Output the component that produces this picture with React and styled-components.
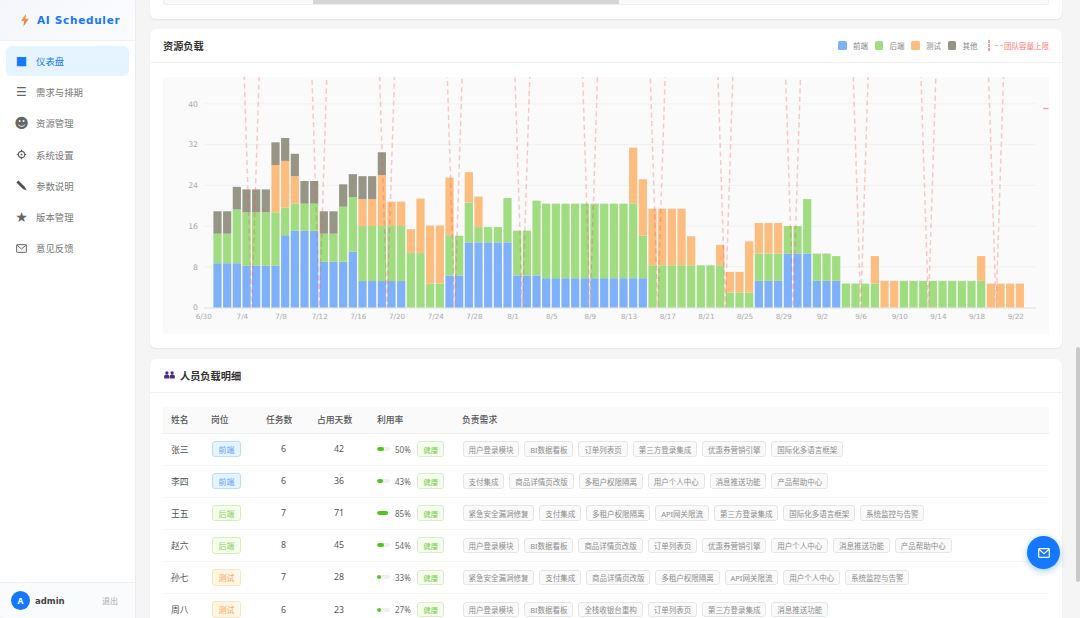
import React from 'react';
import styled, { createGlobalStyle } from 'styled-components';

const GlobalStyle = createGlobalStyle`
  html, body {
    margin: 0;
    height: 100%;
    overflow: hidden;
    background: #f5f5f5;
    font-family: "Noto Sans", "Noto Sans CJK SC", sans-serif;
  }
  * { box-sizing: border-box; }
`;

const Shell = styled.div`
  display: flex;
  height: 618px;
  overflow: hidden;
  position: relative;
`;

const Sidebar = styled.aside`
  width: 136px;
  flex-shrink: 0;
  display: flex;
  flex-direction: column;
  background: #fff;
  border-right: 1px solid #ececec;
  border-bottom-left-radius: 6px;
`;

const Brand = styled.div`
  height: 41px;
  display: flex;
  align-items: center;
  gap: 5px;
  padding-left: 18px;
  background: linear-gradient(135deg, #f4f6fb, #fbfcfe);
  border-bottom: 1px solid #f0f0f0;
`;

const BrandName = styled.span`
  font-family: "DejaVu Sans", sans-serif;
  font-size: 10.5px;
  font-weight: 700;
  letter-spacing: 0.7px;
  color: #1677ff;
`;

const Menu = styled.nav`
  flex: 1;
  padding: 5px 6px 0;
  display: flex;
  flex-direction: column;
  gap: 1.2px;
`;

const MenuItem = styled.div`
  height: 30px;
  display: flex;
  align-items: center;
  padding-left: 9px;
  border-radius: 6px;
  font-size: 9.4px;
  color: ${(p) => (p.$active ? '#1677ff' : '#777')};
  background: ${(p) => (p.$active ? '#e6f4ff' : 'transparent')};
`;

const MenuIcon = styled.span`
  width: 13px;
  margin-right: 8px;
  display: flex;
  justify-content: center;
  font-family: "DejaVu Sans", sans-serif;
  font-size: ${(p) => p.$size || 12}px;
  line-height: 1;
  color: ${(p) => (p.$active ? '#1677ff' : '#666')};
`;

const UserBar = styled.div`
  height: 36px;
  display: flex;
  align-items: center;
  padding: 0 17px 0 11px;
  background: #fafbfd;
  border-top: 1px solid #f0f0f0;
  border-bottom-left-radius: 6px;
`;

const Avatar = styled.div`
  width: 19px;
  height: 19px;
  border-radius: 50%;
  display: flex;
  align-items: center;
  justify-content: center;
  background: #1677ff;
  color: #fff;
  font-size: 8.5px;
  font-weight: 700;
`;

const UserName = styled.span`
  flex: 1;
  margin-left: 5px;
  font-family: "DejaVu Sans", sans-serif;
  font-size: 8.5px;
  font-weight: 700;
  color: #444;
`;

const Logout = styled.span`
  font-size: 8px;
  color: #aaa;
`;

const Main = styled.main`
  flex: 1;
  min-width: 0;
  display: flex;
  flex-direction: column;
  gap: 10.5px;
  padding: 0 18px 0 14px;
  background: #f5f5f5;
`;

const Card = styled.section`
  flex-shrink: 0;
  background: #fff;
  border-radius: 6px;
  box-shadow: 0 1px 2px rgba(0, 0, 0, 0.07);
`;

const TopStub = styled(Card)`
  height: 18.5px;
  padding: 0 13px;
  border-top-left-radius: 0;
  border-top-right-radius: 0;
`;

const StubTrack = styled.div`
  height: 4.5px;
  background: #fafafa;
  border: 1px solid #eee;
  border-top: 0;
  border-radius: 0 0 3px 3px;
  position: relative;
`;

const StubThumb = styled.div`
  position: absolute;
  left: 149px;
  top: 0;
  width: 306px;
  height: 4px;
  background: #d6d6d6;
`;

const CardHeader = styled.header`
  height: 34px;
  display: flex;
  align-items: center;
  justify-content: space-between;
  padding: 0 13px;
  border-bottom: 1px solid #f2f2f2;
`;

const CardTitle = styled.h3`
  margin: 0;
  display: flex;
  align-items: center;
  gap: 5px;
  padding-left: ${(p) => (p.$withIcon ? 1 : 0)}px;
  font-size: 10.2px;
  font-weight: 600;
  color: #333;
`;

const Legend = styled.div`
  display: flex;
  align-items: center;
  font-size: 7.5px;
  color: #888;
`;

const LegendItem = styled.span`
  display: flex;
  align-items: center;
  gap: 6.5px;
  margin-right: 6.5px;
`;

const Swatch = styled.i`
  width: 8.5px;
  height: 8.5px;
  border-radius: 1.5px;
  background: ${(p) => p.$color};
`;

const CapacityKey = styled.span`
  display: flex;
  align-items: center;
  margin-left: 3.5px;
  color: #ff7875;
`;

const CapacityBar = styled.i`
  width: 2px;
  height: 11px;
  margin-right: 5px;
  background: repeating-linear-gradient(#ff9c9d 0 3px, transparent 3px 4px);
`;

const CapacityDash = styled.i`
  width: 8px;
  margin-right: 1.5px;
  border-top: 1.2px dashed #ffb0b0;
`;

const ChartWrap = styled.div`
  padding: 14px 13px 14px;
`;

const ChartBox = styled.div`
  height: 257px;
  background: #fafafa;
  svg { display: block; }
`;

const TableWrap = styled.div`
  padding: 14px 13px 0;
`;

const Table = styled.table`
  width: 886px;
  border-collapse: collapse;
  table-layout: fixed;
  font-size: 8.8px;
  color: #555;
`;

const Th = styled.th`
  height: 26.5px;
  padding: 0 0 0 8px;
  text-align: left;
  font-weight: 500;
  background: #fafafa;
  color: #555;
  border-bottom: 1px solid #f0f0f0;
`;

const Td = styled.td`
  height: 32.1px;
  padding: 0 0 0 ${(p) => (p.$center ? 0 : 8)}px;
  text-align: ${(p) => (p.$center ? 'center' : 'left')};
  border-bottom: 1px solid #f5f5f5;
  white-space: nowrap;
`;

const roleColors = {
  前端: ['#e6f4ff', '#bcdcff', '#5a9fff'],
  后端: ['#f6ffed', '#d3efba', '#7fcf55'],
  测试: ['#fff7e6', '#ffe2bc', '#fa9f45'],
};

const Tag = styled.span`
  display: inline-flex;
  align-items: center;
  justify-content: center;
  height: 16.5px;
  padding: 0 5.5px;
  font-size: 7.9px;
  border-radius: 3px;
  border: 1px solid ${(p) => roleColors[p.$role][1]};
  background: ${(p) => roleColors[p.$role][0]};
  color: ${(p) => roleColors[p.$role][2]};
`;

const RoleCell = styled.div`
  padding-left: 1px;
`;

const UsageCell = styled.div`
  display: flex;
  align-items: center;
`;

const Progress = styled.div`
  width: 13px;
  height: 4px;
  border-radius: 2px;
  background: #f0f0f0;
  overflow: hidden;
`;

const ProgressFill = styled.div`
  height: 100%;
  border-radius: 2px;
  background: #52c41a;
`;

const Percent = styled.span`
  width: 22.3px;
  margin-left: 5px;
  font-size: 8px;
  color: #666;
`;

const HealthTag = styled.span`
  display: inline-flex;
  align-items: center;
  justify-content: center;
  width: 26.7px;
  height: 15.7px;
  font-size: 7.4px;
  border-radius: 3px;
  border: 1px solid #d9f0c6;
  background: #f6ffed;
  color: #76cc4c;
`;

const ReqList = styled.div`
  display: flex;
  gap: 5px;
  padding-left: 0.5px;
`;

const ReqTag = styled.span`
  display: inline-flex;
  align-items: center;
  height: 15.6px;
  padding: 0 4.9px;
  font-size: 7.5px;
  border-radius: 3px;
  border: 1px solid #e6e6e6;
  background: #fafafa;
  color: #8c8c8c;
`;

const Fab = styled.button`
  position: absolute;
  left: 1027px;
  top: 536px;
  width: 33px;
  height: 33px;
  padding: 0;
  border: 0;
  border-radius: 50%;
  display: flex;
  align-items: center;
  justify-content: center;
  background: #1677ff;
  box-shadow: 0 2px 7px rgba(22, 119, 255, 0.4);
`;

const ScrollThumb = styled.div`
  position: absolute;
  right: 0;
  top: 347px;
  width: 4px;
  height: 235px;
  border-radius: 2px;
  background: #c9c9c9;
`;

const GearIcon = () => (
  <svg width="11" height="11" viewBox="0 0 11 11" fill="none" stroke="#5f5f5f">
    <circle cx="5.5" cy="5.5" r="3.2" strokeWidth="1.2" />
    <circle cx="5.5" cy="5.5" r="1" fill="#5f5f5f" stroke="none" />
    <path d="M5.5 0.8V2.2M5.5 8.8V10.2M0.8 5.5H2.2M8.8 5.5H10.2" strokeWidth="1.2" />
  </svg>
);

const PencilIcon = () => (
  <svg width="11" height="11" viewBox="0 0 11 11">
    <path d="M0.4 2.4 L2.4 0.4 L9 7 L10.6 10.6 L7 9 Z" fill="#505050" />
  </svg>
);

const EnvelopeIcon = () => (
  <svg width="11" height="9" viewBox="0 0 11 9" fill="#f4f4f4" stroke="#6f6f6f" strokeWidth="1">
    <rect x="0.6" y="0.6" width="9.8" height="7.8" rx="0.6" />
    <path d="M0.8 1 L5.5 5 L10.2 1" fill="none" />
  </svg>
);

const menu = [
  { icon: '■', label: '仪表盘' },
  { icon: '☰', label: '需求与排期' },
  { icon: '☻', label: '资源管理', size: 14 },
  { icon: <GearIcon />, label: '系统设置' },
  { icon: <PencilIcon />, label: '参数说明' },
  { icon: '★', label: '版本管理', size: 14 },
  { icon: <EnvelopeIcon />, label: '意见反馈' },
];

const COLORS = { blue: '#7fb1fb', green: '#a0dc80', orange: '#fdbd7e', gray: '#979686' };

// [blue, green, orange, gray], cumulative tops read off the y axis
const bars = [
  [8.7, 14.5, 0, 18.9], [8.7, 14.5, 0, 18.9], [8.7, 19.25, 0, 23.7], [8.2, 18.7, 0, 23.2],
  [8.2, 18.7, 0, 23.2], [8.2, 18.7, 0, 23.2], [8.2, 18.7, 28, 32.45], [14.2, 19.6, 28.8, 33.3],
  [15.06, 20.4, 25.8, 30.2], [15.06, 20.4, 0, 24.85], [15.06, 20.4, 0, 24.85], [9, 14.5, 0, 18.9],
  [9, 14.5, 0, 18.9], [9, 19.8, 0, 24.2], [11, 21.7, 0, 26.2], [5.2, 16, 21.3, 25.8],
  [5.2, 16, 21.3, 25.8], [5.2, 16, 26, 30.5], [5.2, 16, 20.8, 0], [5.2, 16, 20.8, 0],
  [0, 10.7, 15.4, 0], [0, 10.7, 21.4, 0], [0, 4.7, 16.1, 0], [0, 4.7, 16.1, 0],
  [6.3, 14.2, 25.5, 0], [6.3, 14.1, 0, 0], [12.8, 20.6, 26.6, 0], [12.8, 15.8, 21.8, 0],
  [12.8, 15.8, 0, 0], [12.8, 15.8, 0, 0], [12.8, 21.5, 0, 0], [6.3, 15.1, 0, 0],
  [6.3, 15.1, 0, 0], [6.3, 21, 0, 0],
  ...Array.from({ length: 9 }, () => [5.76, 20.4, 0, 0]),
  [5.76, 20.4, 31.4, 0], [5.76, 14.1, 25.2, 0], [0, 8.3, 19.4, 0], [0, 8.3, 19.4, 0],
  [0, 8.3, 19.4, 0], [0, 8.3, 19.4, 0], [0, 8.3, 14, 0], [0, 8.3, 0, 0], [0, 8.3, 0, 0],
  [0, 8.3, 12.3, 0], [0, 2.95, 7, 0], [0, 2.95, 7, 0], [0, 2.95, 13, 0], [5.24, 10.6, 16.6, 0],
  [5.24, 10.6, 16.6, 0], [5.24, 10.6, 16.6, 0], [10.6, 16, 0, 0], [10.6, 16, 0, 0],
  [10.6, 21.3, 0, 0], [5.24, 10.6, 0, 0], [5.24, 10.6, 0, 0], [5.24, 10.1, 0, 0],
  [0, 4.7, 0, 0], [0, 4.7, 0, 0], [0, 4.7, 0, 0], [0, 4.7, 10.1, 0], [0, 0, 5.24, 0], [0, 0, 5.24, 0],
  ...Array.from({ length: 8 }, () => [0, 5.24, 0, 0]),
  [0, 5.24, 10.1, 0], [0, 0, 4.7, 0], [0, 0, 4.7, 0], [0, 0, 4.7, 0], [0, 0, 4.7, 0],
];

const BASE = 307.5;
const UNIT = 5.09;
const yOf = (v) => BASE - v * UNIT;

const dateLabels = [
  '6/30', '7/4', '7/8', '7/12', '7/16', '7/20', '7/24', '7/28', '8/1', '8/5', '8/9', '8/13',
  '8/17', '8/21', '8/25', '8/29', '9/2', '9/6', '9/10', '9/14', '9/18', '9/22',
];

const capacityPoints = () => {
  const pts = [];
  for (let k = 0; k < 12; k++) {
    const c = 251.7 + 67.67 * k;
    pts.push(`${c - 9.67},7`, `${c},${BASE}`, `${c + 9.67},7`);
  }
  return pts.join(' ');
};

const LoadChart = () => (
  <svg width="886" height="257" viewBox="163 77 886 257">
    {[8, 16, 24, 32, 40].map((v) => (
      <line key={v} x1="204" x2="1036" y1={yOf(v)} y2={yOf(v)} stroke="#f1f1f1" />
    ))}
    <line x1="204" x2="1036" y1={BASE + 0.5} y2={BASE + 0.5} stroke="#e9e9e9" strokeWidth="1.5" />
    {[0, 8, 16, 24, 32, 40].map((v) => (
      <text key={v} x="198" y={yOf(v) + 2.8} textAnchor="end" fontSize="7.7" fill="#aaa" fontFamily="DejaVu Sans, sans-serif">
        {v}
      </text>
    ))}
    {dateLabels.map((d, i) => (
      <text key={d} x={203.7 + 38.67 * i} y="319" textAnchor="middle" fontSize="7.2" fill="#aaa" fontFamily="DejaVu Sans, sans-serif">
        {d}
      </text>
    ))}
    {bars.map(([b, g, o, y], i) => {
      const x = 213.4 + 9.667 * i;
      const segs = [[0, b, COLORS.blue], [b, g, COLORS.green], [g || b, o, COLORS.orange], [o || g, y, COLORS.gray]];
      return segs
        .filter(([from, to]) => to > 0 && to > from)
        .map(([from, to, color]) => (
          <rect key={color + i} x={x} y={yOf(to)} width="8.2" height={(to - from) * UNIT} fill={color} />
        ));
    })}
    <polyline points={capacityPoints()} fill="none" stroke="#ff4d4f" strokeOpacity="0.3" strokeWidth="1.5" strokeDasharray="5 3.5" />
    <line x1="1043" x2="1048.5" y1="108.5" y2="108.5" stroke="#ff9c9d" strokeWidth="1.2" />
  </svg>
);

const people = [
  ['张三', '前端', 6, 42, 50, ['用户登录模块', 'BI数据看板', '订单列表页', '第三方登录集成', '优惠券营销引擎', '国际化多语言框架']],
  ['李四', '前端', 6, 36, 43, ['支付集成', '商品详情页改版', '多租户权限隔离', '用户个人中心', '消息推送功能', '产品帮助中心']],
  ['王五', '后端', 7, 71, 85, ['紧急安全漏洞修复', '支付集成', '多租户权限隔离', 'API网关限流', '第三方登录集成', '国际化多语言框架', '系统监控与告警']],
  ['赵六', '后端', 8, 45, 54, ['用户登录模块', 'BI数据看板', '商品详情页改版', '订单列表页', '优惠券营销引擎', '用户个人中心', '消息推送功能', '产品帮助中心']],
  ['孙七', '测试', 7, 28, 33, ['紧急安全漏洞修复', '支付集成', '商品详情页改版', '多租户权限隔离', 'API网关限流', '用户个人中心', '系统监控与告警']],
  ['周八', '测试', 6, 23, 27, ['用户登录模块', 'BI数据看板', '全栈收银台重构', '订单列表页', '第三方登录集成', '消息推送功能']],
];

const colWidths = [40, 55, 51, 60, 85, 595];

const BoltIcon = () => (
  <svg width="14" height="14" viewBox="0 0 14 14">
    <defs>
      <linearGradient id="bolt" x1="0" y1="0" x2="0" y2="1">
        <stop offset="0" stopColor="#f7a544" />
        <stop offset="1" stopColor="#f06a3c" />
      </linearGradient>
    </defs>
    <path d="M8.2 0.5 L3 7.8 H6.2 L5.4 13.5 L10.8 5.8 H7.4 Z" fill="url(#bolt)" />
  </svg>
);

const TeamIcon = () => (
  <svg width="11" height="8" viewBox="0 0 11 8" fill="#4a2a85">
    <circle cx="2.9" cy="1.8" r="1.6" />
    <circle cx="8.1" cy="1.8" r="1.6" />
    <path d="M0.2 7.6 V5.2 C0.2 4 1.4 3.4 2.9 3.4 C4.4 3.4 5.2 4 5.2 5.2 V7.6 Z" />
    <path d="M5.8 7.6 V5.2 C5.8 4 6.6 3.4 8.1 3.4 C9.6 3.4 10.8 4 10.8 5.2 V7.6 Z" />
  </svg>
);

const MailIcon = () => (
  <svg width="12" height="10" viewBox="0 0 12 10" fill="none" stroke="#fff" strokeWidth="1.2">
    <rect x="0.7" y="0.7" width="10.6" height="8.6" rx="0.8" />
    <path d="M0.9 1.2 L6 5.6 L11.1 1.2" />
  </svg>
);

const App = () => (
  <Shell>
    <GlobalStyle />
    <Sidebar>
      <Brand>
        <BoltIcon />
        <BrandName>AI Scheduler</BrandName>
      </Brand>
      <Menu>
        {menu.map(({ icon, label, size }, i) => (
          <MenuItem key={label} $active={i === 0}>
            <MenuIcon $active={i === 0} $size={size}>{icon}</MenuIcon>
            {label}
          </MenuItem>
        ))}
      </Menu>
      <UserBar>
        <Avatar>A</Avatar>
        <UserName>admin</UserName>
        <Logout>退出</Logout>
      </UserBar>
    </Sidebar>
    <Main>
      <TopStub>
        <StubTrack>
          <StubThumb />
        </StubTrack>
      </TopStub>
      <Card>
        <CardHeader>
          <CardTitle>资源负载</CardTitle>
          <Legend>
            <LegendItem><Swatch $color={COLORS.blue} />前端</LegendItem>
            <LegendItem><Swatch $color={COLORS.green} />后端</LegendItem>
            <LegendItem><Swatch $color={COLORS.orange} />测试</LegendItem>
            <LegendItem><Swatch $color={COLORS.gray} />其他</LegendItem>
            <CapacityKey>
              <CapacityBar />
              <CapacityDash />
              团队容量上限
            </CapacityKey>
          </Legend>
        </CardHeader>
        <ChartWrap>
          <ChartBox>
            <LoadChart />
          </ChartBox>
        </ChartWrap>
      </Card>
      <Card>
        <CardHeader>
          <CardTitle $withIcon>
            <TeamIcon />
            人员负载明细
          </CardTitle>
        </CardHeader>
        <TableWrap>
          <Table>
            <colgroup>
              {colWidths.map((w, i) => (
                <col key={i} width={w} />
              ))}
            </colgroup>
            <thead>
              <tr>
                <Th>姓名</Th>
                <Th>岗位</Th>
                <Th>任务数</Th>
                <Th>占用天数</Th>
                <Th>利用率</Th>
                <Th>负责需求</Th>
              </tr>
            </thead>
            <tbody>
              {people.map(([name, role, tasks, days, usage, reqs]) => (
                <tr key={name}>
                  <Td>{name}</Td>
                  <Td>
                    <RoleCell>
                      <Tag $role={role}>{role}</Tag>
                    </RoleCell>
                  </Td>
                  <Td $center>{tasks}</Td>
                  <Td $center>{days}</Td>
                  <Td>
                    <UsageCell>
                      <Progress>
                        <ProgressFill style={{ width: `${usage}%` }} />
                      </Progress>
                      <Percent>{usage}%</Percent>
                      <HealthTag>健康</HealthTag>
                    </UsageCell>
                  </Td>
                  <Td>
                    <ReqList>
                      {reqs.map((r) => (
                        <ReqTag key={r}>{r}</ReqTag>
                      ))}
                    </ReqList>
                  </Td>
                </tr>
              ))}
            </tbody>
          </Table>
        </TableWrap>
      </Card>
    </Main>
    <ScrollThumb />
    <Fab aria-label="feedback">
      <MailIcon />
    </Fab>
  </Shell>
);

export default App;
